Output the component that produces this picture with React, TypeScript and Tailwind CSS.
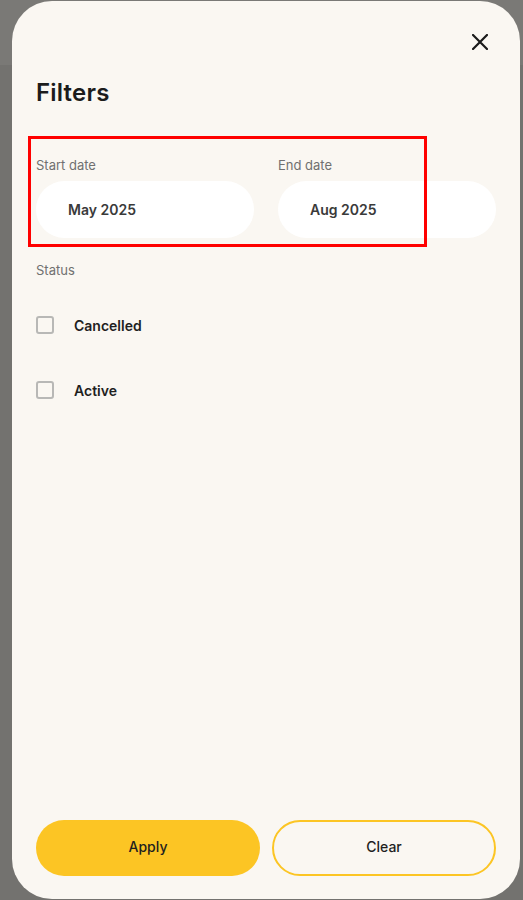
import React from "react";

export default function App() {
  return (
    <div
      className="w-[523px] h-[900px] overflow-hidden bg-[linear-gradient(#7a7976_0_65px,#73726f_65px)] pl-[12px] pr-[3px] pt-[1px] relative"
      style={{ fontFamily: "Inter, 'Noto Sans', sans-serif" }}
    >
      <div className="w-[508px] h-[898px] rounded-[40px] bg-[#faf7f2] flex flex-col px-6">
        <div className="flex justify-end pt-[33px] pr-[8px]">
          <svg width="16" height="16" viewBox="0 0 16 16" fill="none">
            <path d="M1 1L15 15M15 1L1 15" stroke="#1a1a1a" strokeWidth="2.2" strokeLinecap="square" />
          </svg>
        </div>
        <h1 className="mt-[28px] text-[24px] leading-[30px] font-semibold text-[#1c1c1c] tracking-[0.2px]">Filters</h1>
        <div className="mt-[49px] grid grid-cols-2 gap-6">
          <div className="flex flex-col">
            <span className="text-[13px] leading-[16px] text-[#707070]">Start date</span>
            <div className="mt-[8px] h-[57px] rounded-full bg-white flex items-center pl-[32px] text-[14px] font-semibold text-[#3a3a3a]">May 2025</div>
          </div>
          <div className="flex flex-col">
            <span className="text-[13px] leading-[16px] text-[#707070]">End date</span>
            <div className="mt-[8px] h-[57px] rounded-full bg-white flex items-center pl-[32px] text-[14px] font-semibold text-[#3a3a3a]">Aug 2025</div>
          </div>
        </div>
        <span className="mt-[24px] text-[13px] leading-[16px] text-[#707070]">Status</span>
        <div className="mt-[38px] flex flex-col gap-[47px]">
          <label className="flex items-center h-[18px]">
            <span className="w-[18px] h-[18px] rounded-[3px] border-2 border-[#b8b8b6]" />
            <span className="ml-[20px] text-[14px] font-semibold text-[#1f1f1f]">Cancelled</span>
          </label>
          <label className="flex items-center h-[18px]">
            <span className="w-[18px] h-[18px] rounded-[3px] border-2 border-[#b8b8b6]" />
            <span className="ml-[20px] text-[14px] font-semibold text-[#1f1f1f]">Active</span>
          </label>
        </div>
        <div className="mt-auto mb-[23px] grid grid-cols-2 gap-3">
          <button className="h-[56px] rounded-full bg-[#fcc524] text-[14px] leading-[14px] pb-[2px] font-medium text-[#1f1f1f]">Apply</button>
          <button className="h-[56px] rounded-full border-2 border-[#fcc524] text-[14px] leading-[14px] pb-[2px] font-medium text-[#1f1f1f]">Clear</button>
        </div>
      </div>
      <div className="absolute left-[28px] top-[136px] w-[399px] h-[111px] border-[3px] border-[#ff0000]" />
    </div>
  );
}
